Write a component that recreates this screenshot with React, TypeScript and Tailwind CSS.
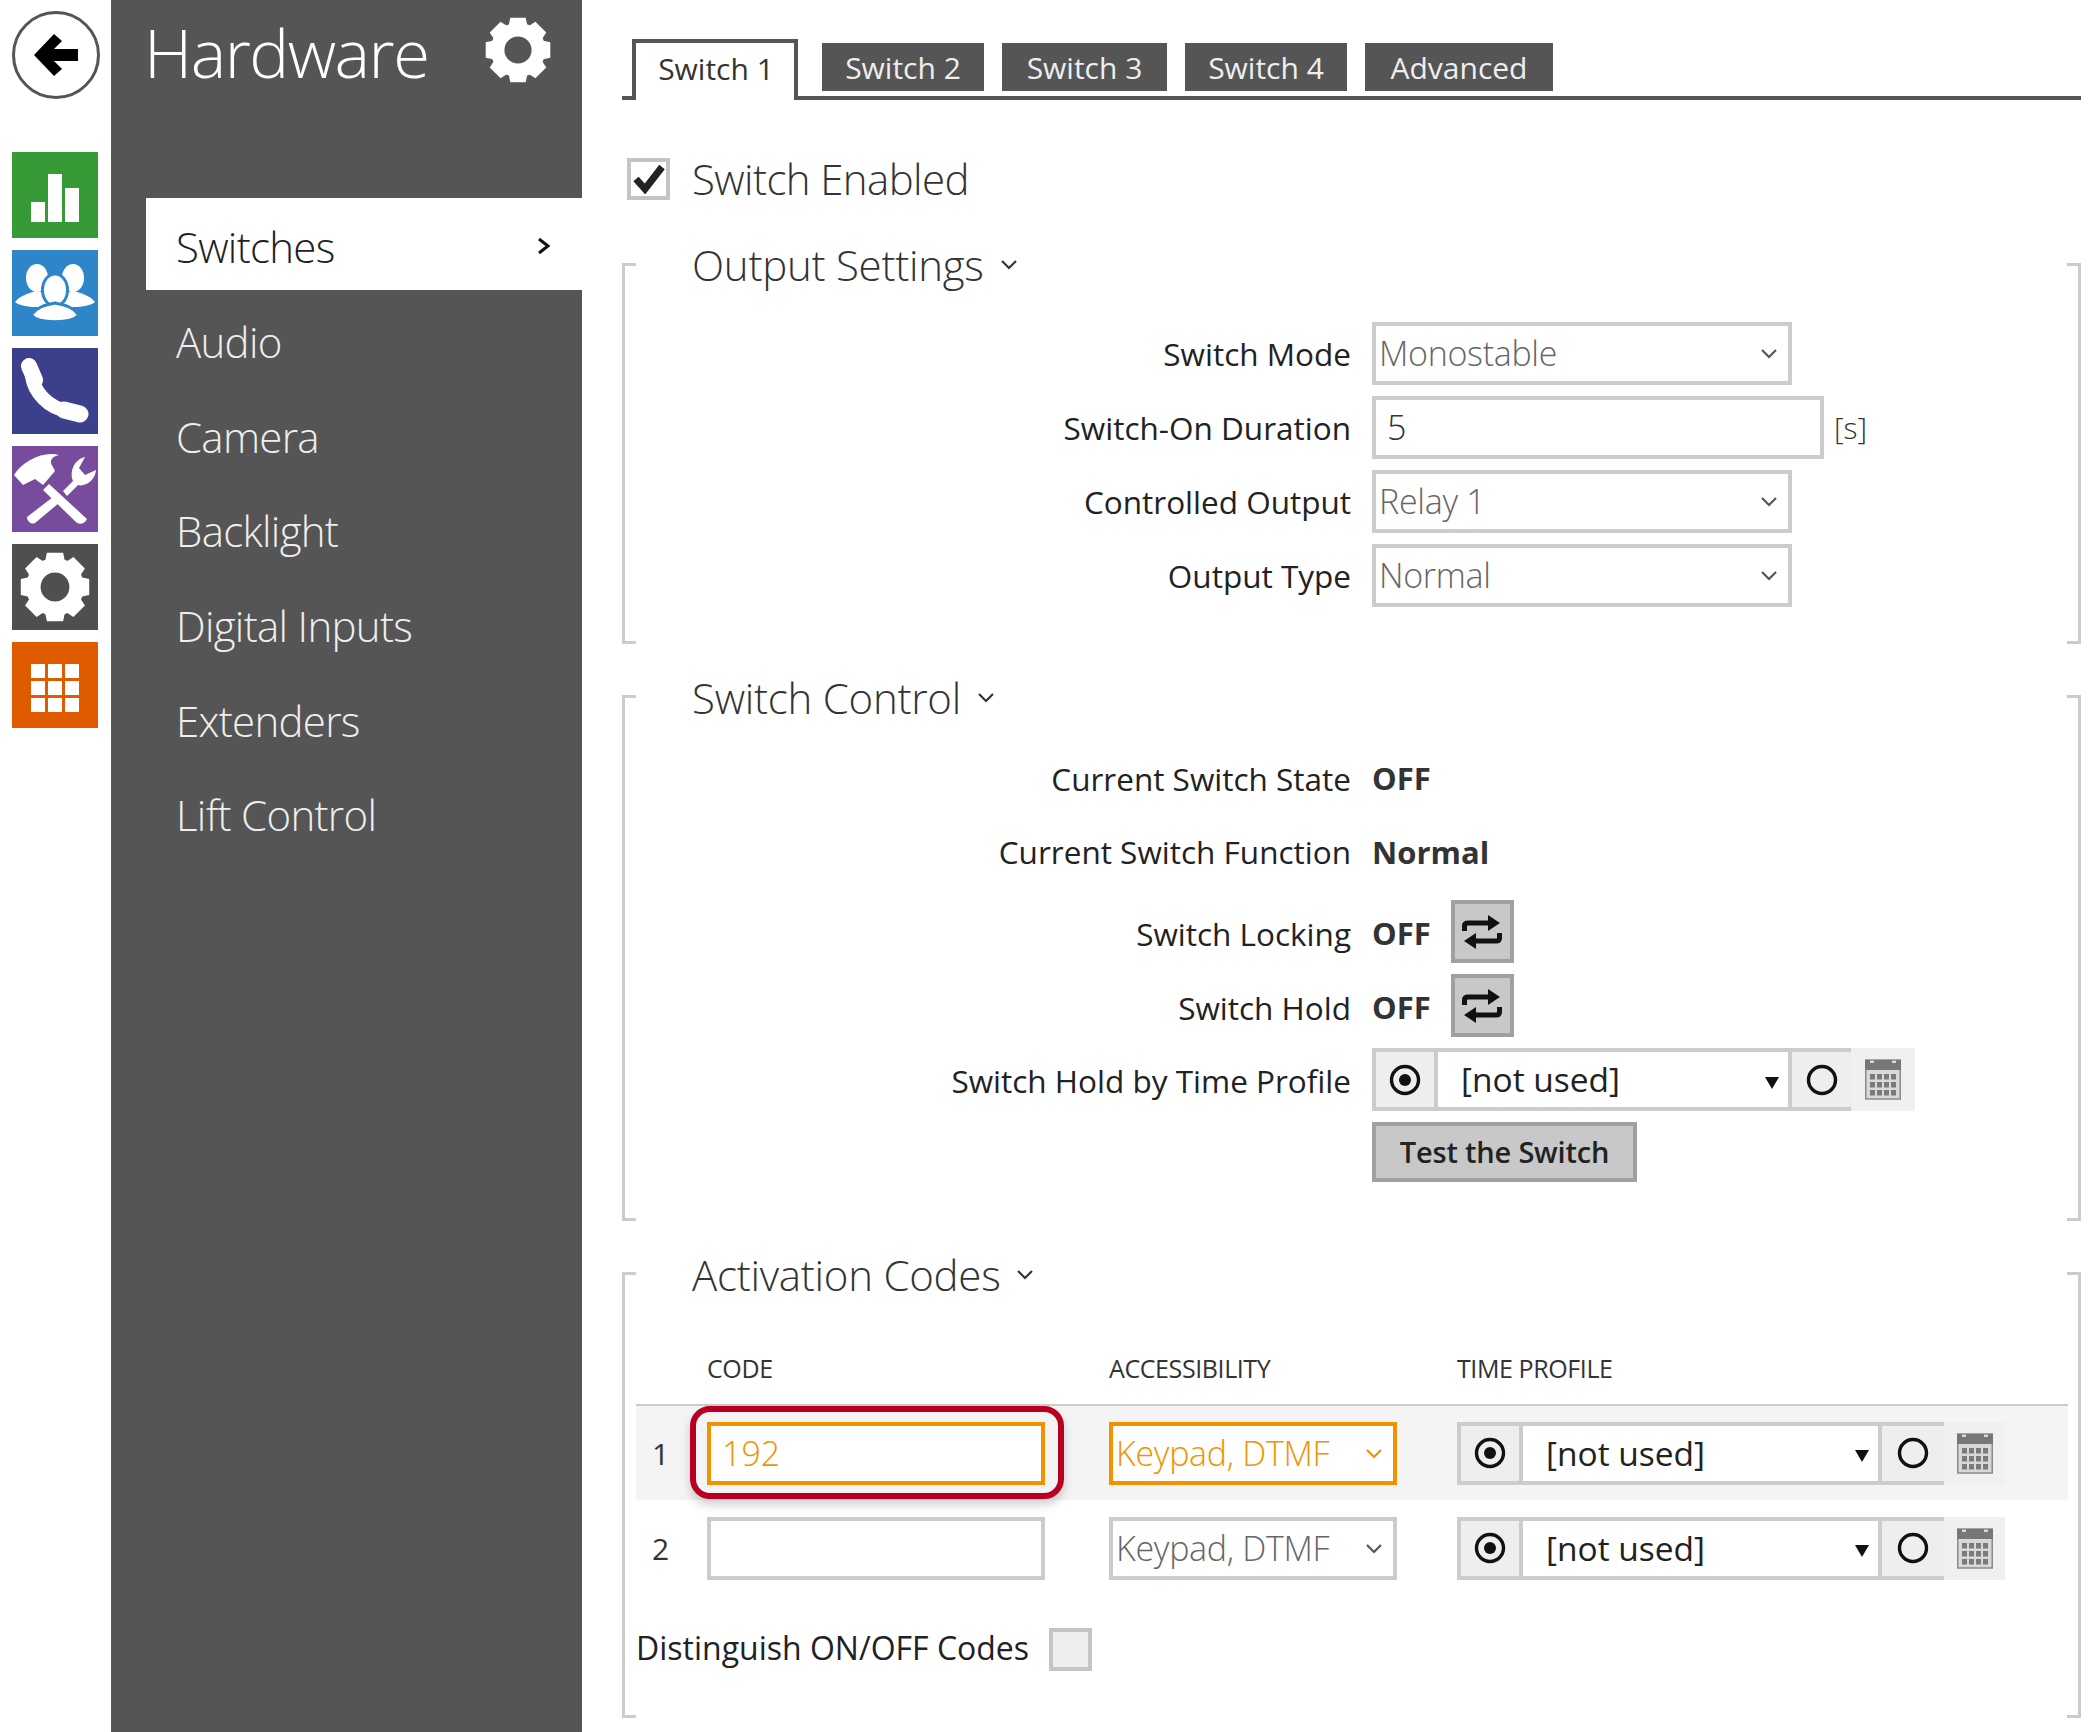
import React from "react";

const FONT = "font-['Open_Sans','Noto_Sans',sans-serif]";

function Gear({ size, color, cls = "" }: { size: number; color: string; cls?: string }) {
  return (
    <svg width={size} height={size} viewBox="0 0 80 80" className={cls}>
      <circle cx="40" cy="40" r="24" fill="none" stroke={color} strokeWidth="16" />
      {[0, 45, 90, 135, 180, 225, 270, 315].map((a) => (
        <path key={a} d="M31 2 H49 L52 16 H28 Z" fill={color} transform={`rotate(${a} 40 40)`} />
      ))}
    </svg>
  );
}

function BackIcon() {
  return (
    <div className="w-[88px] h-[88px] rounded-full border-[3px] border-[#555] bg-white flex items-center justify-center">
      <svg width="46" height="44" viewBox="0 0 46 44">
        <path d="M1 22 L21 1 L29 8 L21 16 H45 V28 H21 L29 36 L21 43 Z" fill="#000" />
      </svg>
    </div>
  );
}

function Tile({ bg, children }: { bg: string; children: React.ReactNode }) {
  return (
    <div className={`w-[86px] h-[86px] flex items-center justify-center ${bg}`}>{children}</div>
  );
}

function Swap() {
  return (
    <svg width="42" height="34" viewBox="0 0 42 34" fill="none">
      <path d="M3.5 16 V11 Q3.5 8 7 8 H30" stroke="#111" strokeWidth="5" />
      <path d="M27 0 L39 8 L27 16 Z" fill="#111" />
      <path d="M38.5 18 V23 Q38.5 26 35 26 H12" stroke="#111" strokeWidth="5" />
      <path d="M15 18 L3 26 L15 34 Z" fill="#111" />
    </svg>
  );
}

function Chevron({ color = "#555" }: { color?: string }) {
  return (
    <svg width="18" height="11" viewBox="0 0 18 11" fill="none">
      <path d="M2 2 L9 9 L16 2" stroke={color} strokeWidth="2.2" />
    </svg>
  );
}

function Calendar() {
  const cells = [0, 1, 2, 3, 4, 5, 6, 7, 8, 9, 10, 11];
  return (
    <svg width="36" height="41" viewBox="0 0 36 41">
      <rect x="0.75" y="1" width="34.5" height="39" fill="#d8d8d8" stroke="#8a8a8a" strokeWidth="1.5" />
      <path d="M0 1 H5 V4 H9 V1 H27 V4 H31 V1 H36 V11 H0 Z" fill="#777" />
      {cells.map((i) => (
        <rect
          key={i}
          x={i % 4 === 0 && i > 7 ? 5 : 5 + (i % 4) * 7}
          y={15 + Math.floor(i / 4) * 8}
          width="5"
          height="5.5"
          fill="#7a7a7a"
        />
      ))}
    </svg>
  );
}

function Radio({ dot }: { dot?: boolean }) {
  return (
    <svg width="32" height="32" viewBox="0 0 32 32" fill="none">
      <circle cx="16" cy="16" r="13.5" stroke="#111" strokeWidth="3.4" />
      {dot && <circle cx="16" cy="16" r="6" fill="#111" />}
    </svg>
  );
}

function TimeProfile({ left, mid, right, cal }: { left: string; mid: string; right: string; cal: string }) {
  return (
    <div className="flex h-[63px]">
      <div className={`${left} flex items-center justify-center bg-[#eeeeee] border-[4px] border-r-0 border-[#cccccc]`}>
        <Radio dot />
      </div>
      <div className={`${mid} flex items-center justify-between bg-white border-[4px] border-[#cccccc] pl-[23px] pr-[9px] text-[33.5px] text-[#222]`}>
        <span>[not used]</span>
        <svg width="14" height="12" viewBox="0 0 14 12" className="mt-[6px]">
          <path d="M0 0 H14 L7 12 Z" fill="#111" />
        </svg>
      </div>
      <div className={`${right} flex items-center justify-center bg-[#eeeeee] border-y-[4px] border-[#cccccc]`}>
        <Radio />
      </div>
      <div className={`${cal} flex items-center justify-center bg-[#f0f0f0]`}>
        <Calendar />
      </div>
    </div>
  );
}

function Section({ h, children }: { h: string; children: React.ReactNode }) {
  return (
    <section className={`relative flex flex-col ${h} border-x-[3px] border-[#cccccc]`}>
      <span className="absolute -left-[3px] top-0 w-[14px] h-[3px] bg-[#cccccc]" />
      <span className="absolute -right-[3px] top-0 w-[14px] h-[3px] bg-[#cccccc]" />
      <span className="absolute -left-[3px] bottom-0 w-[14px] h-[3px] bg-[#cccccc]" />
      <span className="absolute -right-[3px] bottom-0 w-[14px] h-[3px] bg-[#cccccc]" />
      {children}
    </section>
  );
}

function Title({ text, mt }: { text: string; mt: string }) {
  return (
    <div className={`${mt} h-[60px] pl-[67px] pb-[3px] flex items-center gap-[16px] shrink-0`}>
      <span className="text-[42px] font-light text-[#333] tracking-[-0.25px]">{text}</span>
      <Chevron color="#333" />
    </div>
  );
}

function Row({ label, children, cls = "", labelCls = "" }: { label: string; children: React.ReactNode; cls?: string; labelCls?: string }) {
  return (
    <div className={`flex items-center h-[63px] shrink-0 ${cls}`}>
      <div className={`w-[726px] text-right text-[31.5px] text-[#222] ${labelCls}`}>{label}</div>
      <div className="ml-[21px] flex items-center">{children}</div>
    </div>
  );
}

function SelectBox({ w, text, orange }: { w: string; text: string; orange?: boolean }) {
  return (
    <div
      className={`${w} h-[63px] bg-white flex items-center justify-between pl-[3px] pr-[10px] border-[4px] text-[34px] font-light tracking-[-0.3px] ${
        orange ? "border-[#f39200] text-[#f39200]" : "border-[#cccccc] text-[#666]"
      }`}
    >
      <span>{text}</span>
      <Chevron color={orange ? "#f39200" : "#555"} />
    </div>
  );
}

function Value({ text, cls = "" }: { text: string; cls?: string }) {
  return <span className={`text-[31px] font-bold text-[#333] ${cls}`}>{text}</span>;
}

function ToggleBtn() {
  return (
    <div className="ml-[20px] w-[63px] h-[63px] bg-[#c8c8c8] border-[4px] border-[#a0a0a0] flex items-center justify-center">
      <Swap />
    </div>
  );
}

export default function App() {
  const menu = ["Audio", "Camera", "Backlight", "Digital Inputs", "Extenders", "Lift Control"];
  return (
    <div className={`${FONT} w-[2092px] h-[1732px] bg-white flex overflow-hidden`}>
      {/* Icon rail */}
      <div className="w-[111px] shrink-0 pl-[12px] pt-[11px] flex flex-col">
        <BackIcon />
        <div className="mt-[53px] flex flex-col gap-[12px]">
          <Tile bg="bg-[#369b37]">
            <svg width="48" height="48" viewBox="0 0 48 48" fill="#fff" className="mt-[6px]">
              <rect x="0" y="28" width="14" height="20" />
              <rect x="17" y="0" width="14" height="48" />
              <rect x="34" y="14" width="14" height="34" />
            </svg>
          </Tile>
          <Tile bg="bg-[#2e86c9]">
            <svg width="80" height="60" viewBox="0 0 80 60" fill="#fff">
              <ellipse cx="22" cy="15" rx="11" ry="14" />
              <path d="M0 39 C6 32 14 30 22 28 C30 30 38 32 42 40 C34 45 8 46 0 39 Z" />
              <ellipse cx="58" cy="15" rx="11" ry="14" />
              <path d="M80 39 C74 32 66 30 58 28 C50 30 42 32 38 40 C46 45 72 46 80 39 Z" />
              <ellipse cx="40" cy="27" rx="12.5" ry="16" stroke="#2e86c9" strokeWidth="3" />
              <path d="M16 52 C22 44 30 42 40 40 C50 42 58 44 64 52 C56 61 24 61 16 52 Z" stroke="#2e86c9" strokeWidth="3" />
            </svg>
          </Tile>
          <Tile bg="bg-[#3b3f8c]">
            <svg width="70" height="66" viewBox="0 0 70 66" fill="none" stroke="#fff" strokeLinecap="round">
              <path d="M12 18 C14 34 28 50 48 53" strokeWidth="14" />
              <path d="M9 8 L15 22" strokeWidth="16" />
              <path d="M44 52 L60 56" strokeWidth="17" />
            </svg>
          </Tile>
          <Tile bg="bg-[#784c9d]">
            <svg width="84" height="72" viewBox="0 0 84 72" fill="#fff">
              <path d="M30 37 L36 31 L74 66 C72 71 66 72 63 69 Z" />
              <path d="M1 22 C10 8 30 -2 46 2 C38 4 36 8 40 14 L42 18 L30 32 L22 26 L10 32 Z" />
              <path d="M14 64 L40 44 L46 50 L22 70 C18 72 14 68 14 64 Z" />
              <path d="M50 38 L60 28 C56 18 62 6 72 4 L66 15 L72 22 L83 17 C82 28 72 34 65 32 L54 43 Z" />
            </svg>
          </Tile>
          <Tile bg="bg-[#4f4f4f]">
            <Gear size={72} color="#fff" />
          </Tile>
          <Tile bg="bg-[#e05a00]">
            <div className="grid grid-cols-3 gap-[3px] w-[48px] mt-[6px]">
              {[0, 1, 2, 3, 4, 5, 6, 7, 8].map((i) => (
                <div key={i} className="h-[14px] bg-white" />
              ))}
            </div>
          </Tile>
        </div>
      </div>

      {/* Sidebar */}
      <aside className="w-[471px] shrink-0 bg-[#555555] flex flex-col">
        <div className="h-[198px] pl-[33px] pr-[30px] pt-[13px] flex items-start justify-between">
          <span className="text-[67px] leading-[78px] font-light text-white tracking-[-1.5px]">Hardware</span>
          <Gear size={68} color="#fff" cls="mt-[3px]" />
        </div>
        <nav className="ml-[35px] flex flex-col">
          <div className="h-[92px] bg-white pl-[30px] pr-[30px] pt-[4px] flex items-center justify-between text-[42px] font-light text-[#222] tracking-[-0.7px]">
            <span>Switches</span>
            <svg width="16" height="18" viewBox="0 0 16 18" fill="none">
              <path d="M3 2 L12 9 L3 16" stroke="#111" strokeWidth="3" />
            </svg>
          </div>
          {menu.map((m) => (
            <div key={m} className="h-[94.7px] pl-[30px] flex items-center text-[42px] font-light text-[#eeeeee] tracking-[-0.7px]">
              <span className="mt-[8px]">{m}</span>
            </div>
          ))}
        </nav>
      </aside>

      {/* Content */}
      <main className="flex-1 pl-[40px] pr-[11px] flex flex-col">
        <div className="mt-[39px] h-[61px] border-b-[4px] border-[#555555] pl-[10px] flex shrink-0 gap-[18px] text-[30px]">
          <div className="w-[166px] h-[61px] mr-[6px] bg-white border-[4px] border-b-0 border-[#555555] flex items-center justify-center text-[#333] pb-[7px] pl-[2px]">Switch 1</div>
          <div className="w-[162px] h-[48px] mt-[4px] bg-[#555555] text-[#eeeeee] flex items-center justify-center">Switch 2</div>
          <div className="w-[165px] h-[48px] mt-[4px] bg-[#555555] text-[#eeeeee] flex items-center justify-center">Switch 3</div>
          <div className="w-[162px] h-[48px] mt-[4px] bg-[#555555] text-[#eeeeee] flex items-center justify-center">Switch 4</div>
          <div className="w-[188px] h-[48px] mt-[4px] bg-[#555555] text-[#eeeeee] flex items-center justify-center">Advanced</div>
        </div>

        <div className="mt-[58px] ml-[5px] h-[42px] flex items-center gap-[22px] shrink-0">
          <div className="w-[43px] h-[42px] border-[4px] border-[#c4c4c4] bg-white flex items-center justify-center">
            <svg width="32" height="30" viewBox="0 0 32 30" fill="none">
              <path d="M3 15 L12 25 L29 3" stroke="#222" strokeWidth="7" />
            </svg>
          </div>
          <span className="text-[42px] font-light text-[#333] tracking-[-0.6px] -mt-[2px]">Switch Enabled</span>
        </div>

        <div className="mt-[63px]">
          <Section h="h-[381px]">
            <Title text="Output Settings" mt="-mt-[27px]" />
            <div className="mt-[26px] flex flex-col gap-[11px]">
              <Row label="Switch Mode" labelCls="mt-[1px]"><SelectBox w="w-[420px]" text="Monostable" /></Row>
              <Row label="Switch-On Duration" labelCls="mt-[1px]">
                <div className="w-[452px] h-[63px] border-[4px] border-[#cccccc] bg-white flex items-center pl-[11px] text-[34px] font-light text-[#333]">5</div>
                <span className="ml-[10px] text-[30px] text-[#333] font-light">[s]</span>
              </Row>
              <Row label="Controlled Output" labelCls="mt-[1px]"><SelectBox w="w-[420px]" text="Relay 1" /></Row>
              <Row label="Output Type" labelCls="mt-[1px]"><SelectBox w="w-[420px]" text="Normal" /></Row>
            </div>
          </Section>
        </div>

        <div className="mt-[51px]">
          <Section h="h-[526px]">
            <Title text="Switch Control" mt="-mt-[26px]" />
            <div className="mt-[19px] flex flex-col gap-[11px]">
              <Row label="Current Switch State" labelCls="-mt-[2px]"><Value text="OFF" cls="-mt-[2px]" /></Row>
              <Row label="Current Switch Function" labelCls="-mt-[3px]"><Value text="Normal" cls="-mt-[3px]" /></Row>
              <Row label="Switch Locking" cls="mt-[4px]" labelCls="mt-[4px]"><Value text="OFF" cls="mt-[3px]" /><ToggleBtn /></Row>
              <Row label="Switch Hold" labelCls="mt-[4px]"><Value text="OFF" cls="mt-[3px]" /><ToggleBtn /></Row>
              <Row label="Switch Hold by Time Profile" labelCls="mt-[2px]">
                <TimeProfile left="w-[62px]" mid="w-[358px]" right="w-[59px]" cal="w-[64px]" />
              </Row>
              <div className="ml-[747px] w-[265px] h-[60px] bg-[#c8c8c8] border-[4px] border-[#a0a0a0] flex items-center justify-center text-[29px] font-semibold text-[#222] tracking-[-0.2px]">
                Test the Switch
              </div>
            </div>
          </Section>
        </div>

        <div className="mt-[51px]">
          <Section h="h-[446px]">
            <Title text="Activation Codes" mt="-mt-[26px]" />
            <div className="mt-[40px] ml-[11px] w-[1432px] flex flex-col">
              <div className="h-[58px] pb-[12px] flex items-center text-[25px] text-[#333] tracking-[-0.4px]">
                <div className="w-[71px]" />
                <div className="w-[402px]">CODE</div>
                <div className="w-[348px]">ACCESSIBILITY</div>
                <div>TIME PROFILE</div>
              </div>
              <div className="h-[96px] bg-[#f4f4f4] border-t-[2px] border-[#cccccc] flex items-center">
                <div className="w-[71px] pl-[16px] text-[30px] text-[#333]">1</div>
                <div className="relative w-[338px] h-[63px] bg-white border-[4px] border-[#f39200] flex items-center pl-[11px] text-[34px] font-light text-[#f39200]">
                  192
                  <span className="absolute -left-[21px] -right-[23px] -top-[20px] -bottom-[18px] border-[6px] border-[#b70022] rounded-[20px] shadow-[0_6px_10px_rgba(0,0,0,0.18)]" />
                </div>
                <div className="ml-[64px]"><SelectBox w="w-[288px]" text="Keypad, DTMF" orange /></div>
                <div className="ml-[60px]"><TimeProfile left="w-[62px]" mid="w-[363px]" right="w-[62px]" cal="w-[61px]" /></div>
              </div>
              <div className="h-[96px] flex items-center">
                <div className="w-[71px] pl-[16px] text-[30px] text-[#333]">2</div>
                <div className="w-[338px] h-[63px] bg-white border-[4px] border-[#cccccc]" />
                <div className="ml-[64px]"><SelectBox w="w-[288px]" text="Keypad, DTMF" /></div>
                <div className="ml-[60px]"><TimeProfile left="w-[62px]" mid="w-[363px]" right="w-[62px]" cal="w-[61px]" /></div>
              </div>
              <div className="mt-[32px] h-[43px] flex items-center">
                <span className="-mt-[4px] text-[32px] text-[#222]">Distinguish ON/OFF Codes</span>
                <div className="ml-[20px] w-[43px] h-[43px] bg-[#eeeeee] border-[4px] border-[#c4c4c4]" />
              </div>
            </div>
          </Section>
        </div>
      </main>
    </div>
  );
}
